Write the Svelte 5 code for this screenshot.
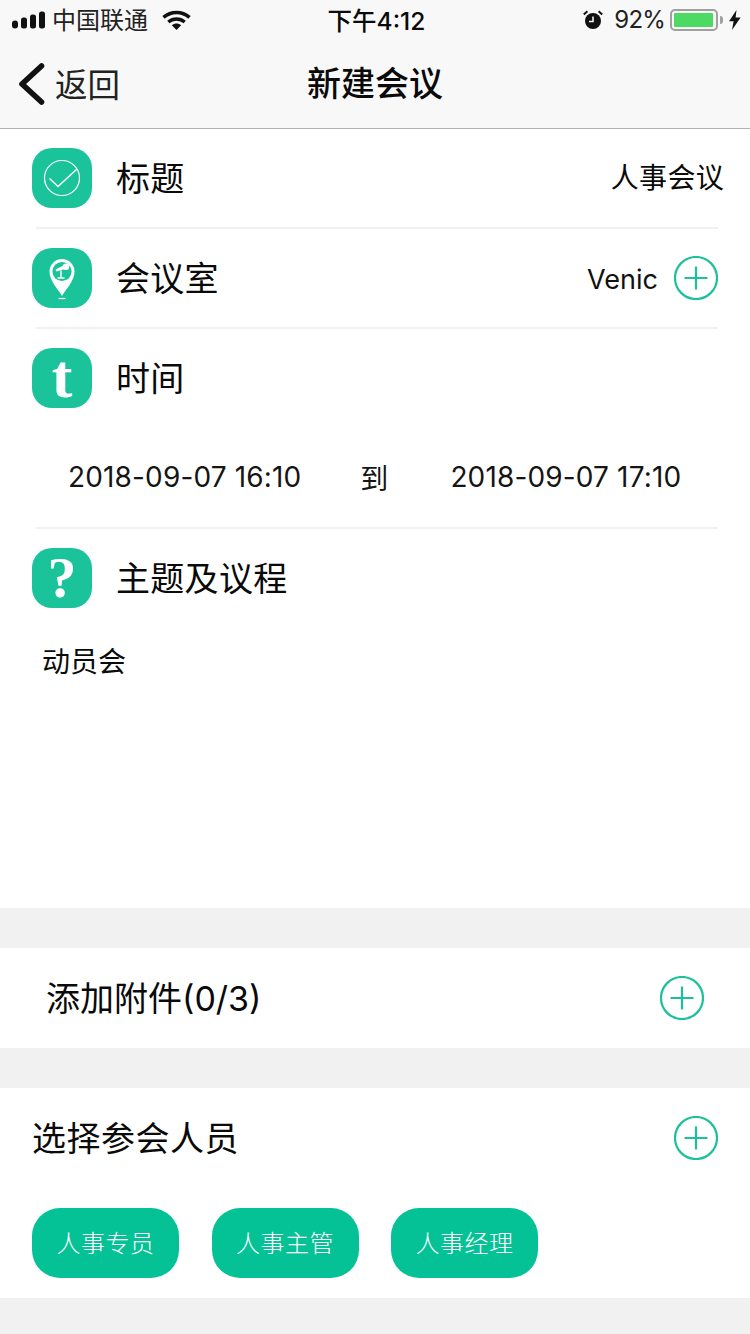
<script>
  const tags = ['人事专员', '人事主管', '人事经理'];
</script>

{#snippet plus()}
  <svg class="plus" viewBox="0 0 44 44" aria-hidden="true">
    <circle cx="22" cy="22" r="21" fill="none" stroke="#1cc09a" stroke-width="2.2" />
    <path d="M22 10.500V33.500M10.500 22H33.500" fill="none" stroke="#1cc09a" stroke-width="2.2" />
  </svg>
{/snippet}

<div class="page">
  <header class="top">
    <div class="status">
      <div class="st-left">
        <svg class="signal" viewBox="0 0 33 18" aria-hidden="true">
          <rect x="0" y="9.500" width="6" height="8" rx="3" fill="#111" />
          <rect x="9" y="6.500" width="6" height="11" rx="2.500" fill="#111" />
          <rect x="18" y="3.500" width="6" height="14" rx="2.500" fill="#111" />
          <rect x="27" y="0.500" width="6" height="17" rx="2.500" fill="#111" />
        </svg>
        <span class="carrier">中国联通</span>
        <svg class="wifi" viewBox="0 0 29 20" aria-hidden="true">
          <path d="M1.500 7.400C9 .8 20 .8 27.500 7.400" fill="none" stroke="#111" stroke-width="3.600" />
          <path d="M6.300 12c4.800-4 11.600-4 16.400 0" fill="none" stroke="#111" stroke-width="3.400" />
          <path d="M9.800 15.200c2.900-2.300 6.500-2.300 9.400 0L14.500 20z" fill="#111" />
        </svg>
      </div>
      <div class="clock">下午4:12</div>
      <div class="st-right">
        <svg class="alarm" viewBox="0 0 20 20" aria-hidden="true">
          <circle cx="10" cy="11" r="8" fill="#111" />
          <path d="M10 6.500v5H6" fill="none" stroke="#fff" stroke-width="1.500" />
          <path d="M.8 4.400 4.400 1.200M19.200 4.400 15.600 1.200" stroke="#111" stroke-width="2" />
        </svg>
        <span class="pct">92%</span>
        <div class="battery"><div class="cell"></div></div>
        <div class="nub"></div>
        <svg class="bolt" viewBox="0 0 12 20" aria-hidden="true">
          <path d="M7.500 0 0 11.200h4.600L3 20l8.600-12.400H6.600z" fill="#111" />
        </svg>
      </div>
    </div>
    <nav class="nav">
      <div class="back">
        <svg class="chev" viewBox="0 0 28 44" aria-hidden="true">
          <path d="M24.500 4 5 22l19.500 18" fill="none" stroke="#111" stroke-width="5.600" stroke-linecap="round" stroke-linejoin="round" />
        </svg>
        <span>返回</span>
      </div>
      <h1>新建会议</h1>
    </nav>
  </header>

  <section class="form">
    <div class="row first">
      <div class="ico">
        <svg viewBox="0 0 60 60" aria-hidden="true">
          <circle cx="30" cy="30" r="17.500" fill="none" stroke="#fff" stroke-width="1.200" />
          <path d="M17.500 30.500 26 38.500 45 21" fill="none" stroke="#fff" stroke-width="1.400" />
        </svg>
      </div>
      <span class="label">标题</span>
      <span class="val end">人事会议</span>
    </div>
    <div class="rule"></div>
    <div class="row">
      <div class="ico">
        <svg viewBox="0 0 60 60" aria-hidden="true">
          <path d="M30 48C26 41 17.500 33 17.500 23.500a12.500 12.500 0 0 1 25 0C42.500 33 34 41 30 48z" fill="#fff" />
          <circle cx="30" cy="23.500" r="9.600" fill="#1bc39b" />
          <path d="M31.500 17.500 23.500 21.500 24.500 23.500 33 21z" fill="#fff" />
          <circle cx="34" cy="18.800" r="3.300" fill="#fff" />
          <path d="M29 22.500v7M25.500 30h7" stroke="#fff" stroke-width="1.400" fill="none" />
          <path d="M26.500 50.500h7" stroke="#fff" stroke-width="1.200" />
        </svg>
      </div>
      <span class="label">会议室</span>
      <span class="val venic">Venic</span>
      {@render plus()}
    </div>
    <div class="rule"></div>
    <div class="row">
      <div class="ico glyph"><span class="t">t</span></div>
      <span class="label">时间</span>
    </div>
    <div class="times">
      <span class="date">2018-09-07 16:10</span>
      <span class="to">到</span>
      <span class="date">2018-09-07 17:10</span>
    </div>
    <div class="rule"></div>
    <div class="row">
      <div class="ico glyph"><span class="q">?</span></div>
      <span class="label">主题及议程</span>
    </div>
    <p class="agenda">动员会</p>
  </section>

  <section class="attach">
    <span class="label">添加附件(0/3)</span>
    {@render plus()}
  </section>

  <section class="people">
    <div class="people-head">
      <span class="label">选择参会人员</span>
      {@render plus()}
    </div>
    <div class="tags">
      {#each tags as tag}
        <span class="tag">{tag}</span>
      {/each}
    </div>
  </section>
</div>

<style>
  :global(body) {
    margin: 0;
    background: #f1f1f1;
  }
  .page {
    width: 750px;
    height: 1334px;
    overflow: hidden;
    background: #f1f1f1;
    color: #0a0a0a;
    font-family: "Inter", "Noto Sans CJK SC", sans-serif;
  }
  .top {
    height: 129px;
    box-sizing: border-box;
    background: #f8f8f8;
    border-bottom: 1px solid #b2b2b2;
  }
  .status {
    height: 40px;
    display: flex;
    align-items: center;
    justify-content: space-between;
    position: relative;
    padding: 0 9px 0 12px;
  }
  .st-left, .st-right {
    display: flex;
    align-items: center;
  }
  .signal { width: 33px; height: 18px; }
  .carrier {
    margin-left: 7px;
    font-size: 24px;
    color: #222;
    padding-bottom: 4px;
  }
  .wifi { width: 29px; height: 20px; margin-left: 14px; }
  .clock {
    position: absolute;
    left: 3px;
    right: 0;
    padding-bottom: 2px;
    text-align: center;
    font-size: 24.500px;
    font-weight: 500;
    pointer-events: none;
  }
  .alarm { width: 20px; height: 20px; }
  .pct {
    margin-left: 11px;
    font-size: 24px;
    color: #222;
    letter-spacing: -0.800px;
    padding-bottom: 1px;
  }
  .battery {
    width: 48px;
    height: 22px;
    margin-left: 5px;
    box-sizing: border-box;
    border: 2px solid #a0a0a0;
    border-radius: 5px;
    padding: 2px;
  }
  .cell { width: 39px; height: 14px; background: #4cd964; border-radius: 1px; }
  .nub { width: 3px; height: 8px; background: #a0a0a0; border-radius: 0 3px 3px 0; margin-left: 2px; }
  .bolt { width: 12px; height: 20px; margin-left: 6px; }
  .nav {
    height: 88px;
    position: relative;
    display: flex;
    align-items: center;
    justify-content: center;
  }
  .back {
    position: absolute;
    left: 17px;
    top: 19px;
    display: flex;
    align-items: center;
    font-size: 32.500px;
    color: #222;
  }
  .chev { width: 28px; height: 44px; }
  .back span { margin-left: 10px; padding-bottom: 3px; }
  h1 {
    margin: 0;
    padding-bottom: 6px;
    font-size: 34px;
    font-weight: 500;
    letter-spacing: 0;
  }
  .form {
    height: 779px;
    background: #fff;
  }
  .row {
    height: 100px;
    box-sizing: border-box;
    padding: 0 32px;
    display: flex;
    align-items: center;
  }
  .first {
    height: 98px;
    margin-bottom: 1px;
  }
  .ico {
    width: 60px;
    height: 60px;
    border-radius: 20px;
    background: #1bc39b;
    flex: none;
    display: flex;
    align-items: center;
    justify-content: center;
    color: #fff;
  }
  .ico svg { width: 60px; height: 60px; display: block; }
  .glyph { font-family: "Liberation Serif", serif; font-weight: 700; }
  .t { font-size: 62px; line-height: 60px; padding-bottom: 5px; }
  .q { font-size: 58px; line-height: 60px; }
  .label {
    margin-left: 0;
    font-size: 34px;
    white-space: nowrap;
    padding-bottom: 4px;
  }
  .row .label {
    margin-left: 24px;
    letter-spacing: 0.300px;
  }
  .val {
    font-size: 28px;
    white-space: nowrap;
    margin-left: auto;
  }
  .end { margin-right: -6px; padding-bottom: 4px; letter-spacing: 0.300px; }
  .venic { margin-right: 16px; padding-top: 3px; font-size: 27px; color: #111; }
  .plus { width: 44px; height: 44px; flex: none; display: block; }
  .rule {
    height: 2px;
    background: #f1f1f1;
    margin: -1px 32px -1px 36px;
    position: relative;
  }
  .times {
    height: 100px;
    box-sizing: border-box;
    padding: 0 0 2px 68px;
    display: flex;
    align-items: center;
    font-size: 28px;
    color: #151515;
  }
  .date { white-space: nowrap; letter-spacing: 0.150px; }
  .to { margin: 0 62px 0 59px; }
  .agenda {
    margin: 0;
    padding: 17px 0 0 42px;
    font-size: 28px;
    line-height: 34px;
  }
  .attach {
    margin-top: 40px;
    height: 100px;
    background: #fff;
    box-sizing: border-box;
    padding: 0 46px;
    display: flex;
    align-items: center;
    justify-content: space-between;
  }
  .people {
    margin-top: 40px;
    height: 210px;
    background: #fff;
    box-sizing: border-box;
    padding: 28px 32px 0;
  }
  .people-head {
    height: 44px;
    display: flex;
    align-items: center;
    justify-content: space-between;
  }
  .people .label { letter-spacing: 0.500px; }
  .tags {
    display: flex;
    gap: 32.500px;
    margin-top: 48px;
  }
  .tag {
    width: 147px;
    height: 70px;
    box-sizing: border-box;
    padding-bottom: 3px;
    border-radius: 28px;
    background: #04c295;
    color: #fff;
    font-size: 24px;
    font-weight: 300;
    display: flex;
    align-items: center;
    justify-content: center;
    letter-spacing: 0.500px;
  }
</style>
